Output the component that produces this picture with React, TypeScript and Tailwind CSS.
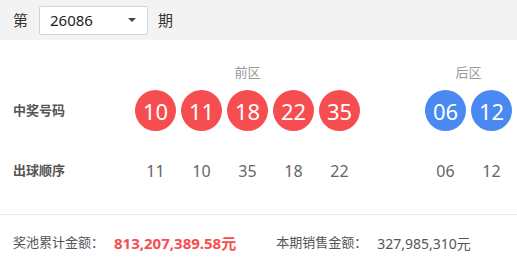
const front = ["10", "11", "18", "22", "35"];
const back = ["06", "12"];
const frontOrder = ["11", "10", "35", "18", "22"];
const backOrder = ["06", "12"];

function Ball({ n, blue }: { n: string; blue?: boolean }) {
  return (
    <div
      className={`flex h-[41px] w-[41px] items-center justify-center rounded-full text-[22px] leading-none text-white ${
        blue ? "bg-[#4a89f1]" : "bg-[#f64d50]"
      }`}
    >
      {n}
    </div>
  );
}

export default function App() {
  return (
    <div
      className="h-[260px] w-[517px] bg-white"
      style={{ fontFamily: '"Noto Sans", "Noto Sans CJK SC", sans-serif' }}
    >
      <div className="flex h-10 items-center bg-[#f3f3f3] pl-[13px] text-[15px] text-[#333]">
        <span>第</span>
        <div className="ml-[11px] flex h-[29px] w-[109px] items-center justify-between rounded-[2px] border border-[#cdd3e2] bg-white pl-[10px] pr-[11px]">
          <span className="text-[15px] text-[#222]">26086</span>
          <span className="h-0 w-0 border-x-[4px] border-t-[4px] border-x-transparent border-t-[#444]" />
        </div>
        <span className="ml-[10px]">期</span>
      </div>

      <div className="pt-6">
        <div className="flex h-4 items-center text-[13px] leading-4 text-[#999]">
          <div className="w-[135px]" />
          <div className="w-[225px] text-center">前区</div>
          <div className="ml-[65px] w-[87px] text-center">后区</div>
        </div>

        <div className="mt-[10px] flex items-center">
          <div className="w-[135px] pl-[13px] text-[13px] font-bold text-[#555]">中奖号码</div>
          <div className="flex w-[225px] gap-[5px]">
            {front.map((n) => (
              <Ball key={n} n={n} />
            ))}
          </div>
          <div className="ml-[65px] flex gap-[5px]">
            {back.map((n) => (
              <Ball key={n} n={n} blue />
            ))}
          </div>
        </div>

        <div className="mt-[30px] flex h-5 items-center">
          <div className="w-[135px] pl-[13px] text-[13px] font-bold text-[#555]">出球顺序</div>
          <div className="flex w-[225px] gap-[5px] text-[16px] text-[#666]">
            {frontOrder.map((n) => (
              <span key={n} className="w-[41px] text-center">
                {n}
              </span>
            ))}
          </div>
          <div className="ml-[65px] flex gap-[5px] text-[16px] text-[#666]">
            {backOrder.map((n) => (
              <span key={n} className="w-[41px] text-center">
                {n}
              </span>
            ))}
          </div>
        </div>
      </div>

      <div className="mt-[33px] border-t border-[#ececec]" />

      <div className="mt-[18px] flex h-5 items-center pl-[13px] text-[13px] text-[#555]">
        <span>奖池累计金额：</span>
        <span className="ml-[10px] text-[15px] font-bold text-[#f64d50]">813,207,389.58元</span>
        <span className="ml-[40px]">本期销售金额：</span>
        <span className="ml-[10px] text-[14px] text-[#555]">327,985,310元</span>
      </div>
    </div>
  );
}
